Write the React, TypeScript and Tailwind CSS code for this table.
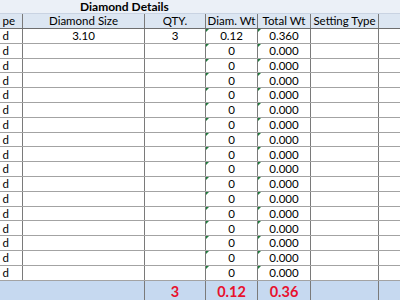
import React from "react";

const COLS = "grid grid-cols-[23px_122px_61px_52px_53px_68px_21px] grid-rows-[100%] whitespace-nowrap";

type Row = { size: string; qty: string; wt: string; total: string };

const ROWS: Row[] = [
  { size: "3.10", qty: "3", wt: "0.12", total: "0.360" },
  ...Array.from({ length: 16 }, () => ({ size: "", qty: "", wt: "0", total: "0.000" })),
];

// little green excel error marker in the top-left corner
function Marker() {
  return (
    <span className="absolute left-0 top-0 h-0 w-0 border-t-[3px] border-r-[3px] border-t-[#1e7b3c] border-r-transparent" />
  );
}

export default function App() {
  return (
    <div
      className="h-[300px] w-[400px] overflow-hidden bg-white text-[11.5px] leading-none text-black"
      style={{ fontFamily: "Lato, 'Liberation Sans', sans-serif" }}
    >
      <div className="flex h-[14px] items-center whitespace-nowrap border-b border-[#c9d3e2] bg-[#ebf0f7] pl-[80px] text-[12px] font-bold">
        Diamond Details
      </div>

      <div className={`${COLS} h-[15px] border-b border-[#6e6e6e] bg-[#dce6f2]`}>
        <div className="flex items-center justify-end overflow-hidden border-r border-[#7a7a7a] pr-[7px]">pe</div>
        <div className="flex items-center justify-center border-r border-[#7a7a7a]">Diamond Size</div>
        <div className="flex items-center justify-center border-r border-[#7a7a7a]">QTY.</div>
        <div className="flex items-center justify-center border-r border-[#7a7a7a]">Diam. Wt</div>
        <div className="flex items-center justify-center border-r border-[#7a7a7a]">Total Wt</div>
        <div className="flex items-center justify-center border-r border-[#7a7a7a]">Setting Type</div>
        <div />
      </div>

      {ROWS.map((r, i) => (
        <div key={i} className={`${COLS} h-[14.8px] border-b border-[#a3a3a3]`}>
          <div className="flex items-center justify-end border-r border-[#7a7a7a] pr-[13px]">d</div>
          <div className="flex items-center justify-center border-r border-[#7a7a7a]">{r.size}</div>
          <div className="flex items-center justify-center border-r border-[#7a7a7a]">{r.qty}</div>
          <div className="relative flex items-center justify-center border-r border-[#7a7a7a]">
            <Marker />
            {r.wt}
          </div>
          <div className="relative flex items-center justify-center border-r border-[#7a7a7a]">
            <Marker />
            {r.total}
          </div>
          <div className="border-r border-[#7a7a7a]" />
          <div />
        </div>
      ))}

      <div className={`${COLS} h-[24px] bg-[#c6d9f0] text-[14.5px] font-bold text-[#e8112d]`}>
        <div />
        <div className="border-r border-[#7a7a7a]" />
        <div className="flex items-center justify-center border-r border-[#7a7a7a]">3</div>
        <div className="flex items-center justify-center border-r border-[#7a7a7a]">0.12</div>
        <div className="flex items-center justify-center border-r border-[#7a7a7a]">0.36</div>
        <div className="border-r border-[#7a7a7a]" />
        <div />
      </div>
    </div>
  );
}
